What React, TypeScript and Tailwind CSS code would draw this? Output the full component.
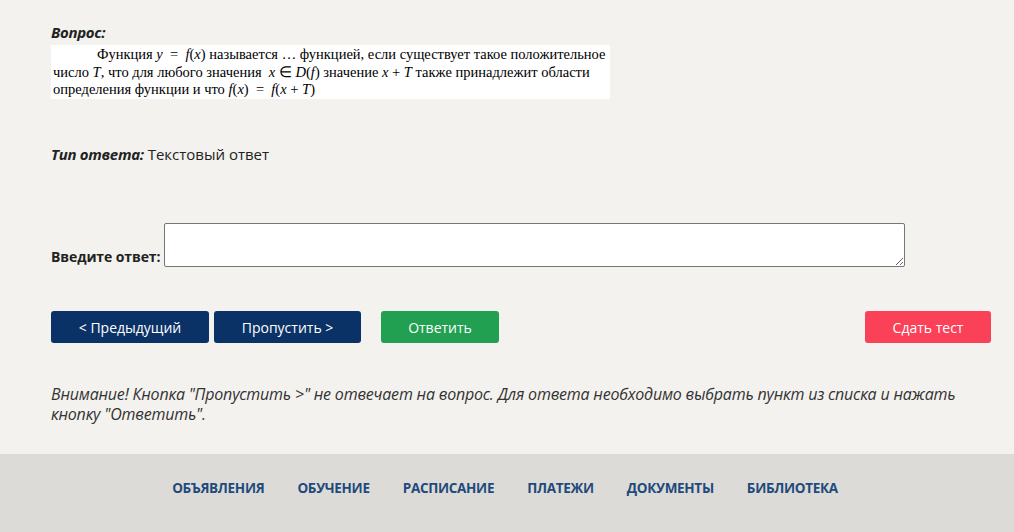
import React from "react";

const navItems = [
  "Объявления",
  "Обучение",
  "Расписание",
  "Платежи",
  "Документы",
  "Библиотека",
];

const M = ({ children }: { children: React.ReactNode }) => (
  <span className="italic">{children}</span>
);

const App = () => {
  return (
    <div
      className="min-h-[532px] flex flex-col bg-[#f3f2ee] text-[#222]"
      style={{ fontFamily: '"Open Sans", "Noto Sans", sans-serif' }}
    >
      <main className="flex-1 pl-[51px] pr-[23px] pt-[22px]">
        <p className="font-bold italic text-[15px] leading-[20px] tracking-[-0.3px]">Вопрос:</p>
        <div
          className="mt-[3px] w-[559px] h-[54px] bg-white pl-[2px] pt-[1px] text-[14.5px] leading-[17.5px] text-black whitespace-nowrap"
          style={{ fontFamily: '"Liberation Serif", "Times New Roman", serif' }}
        >
          <p className="pl-[44px]">
            Функция <M>y</M> &nbsp;=&nbsp; <M>f</M>(<M>x</M>) называется … функцией, если существует такое положительное
          </p>
          <p>
            число <M>T</M>, что для любого значения &nbsp;<M>x</M> ∈ <M>D</M>(<M>f</M>) значение <M>x</M> + <M>T</M> также принадлежит области
          </p>
          <p>
            определения функции и что <M>f</M>(<M>x</M>) &nbsp;=&nbsp; <M>f</M>(<M>x</M> + <M>T</M>)
          </p>
        </div>

        <p className="mt-[45px] text-[15px] leading-[20px]">
          <span className="font-bold italic tracking-[-0.3px]">Тип ответа:</span> Текстовый ответ
        </p>

        <div className="mt-[59px] flex items-end gap-[4px]">
          <label className="font-bold text-[14px] leading-[20px] tracking-[-0.1px]">Введите ответ:</label>
          <textarea className="w-[741px] h-[44px] bg-white border border-[#767676] rounded-[2px] resize" />
        </div>

        <div className="mt-[44px] flex items-center">
          <button className="w-[158px] h-[32px] rounded-[3px] bg-[#0b3266] text-white text-[14px]">
            &lt; Предыдущий
          </button>
          <button className="ml-[5px] w-[147px] h-[32px] rounded-[3px] bg-[#0b3266] text-white text-[14px]">
            Пропустить &gt;
          </button>
          <button className="ml-[20px] w-[118px] h-[32px] rounded-[3px] bg-[#22a052] text-white text-[14px]">
            Ответить
          </button>
          <button className="ml-auto w-[126px] h-[32px] rounded-[3px] bg-[#fb4157] text-white text-[14px]">
            Сдать тест
          </button>
        </div>

        <p className="mt-[41px] max-w-[930px] italic text-[16px] leading-[20px] text-[#333] tracking-[-0.2px]">
          Внимание! Кнопка "Пропустить &gt;" не отвечает на вопрос. Для ответа необходимо выбрать пункт из списка и нажать кнопку "Ответить".
        </p>
      </main>

      <footer className="mt-[22px] h-[78px] pb-[10px] bg-[#dcdbd7] flex items-center justify-center gap-[33px] pr-[4px]">
        {navItems.map((item) => (
          <a
            key={item}
            href="#"
            className="uppercase font-bold text-[13.5px] text-[#1f4a7c] tracking-[-0.3px]"
          >
            {item}
          </a>
        ))}
      </footer>
    </div>
  );
};

export default App;
